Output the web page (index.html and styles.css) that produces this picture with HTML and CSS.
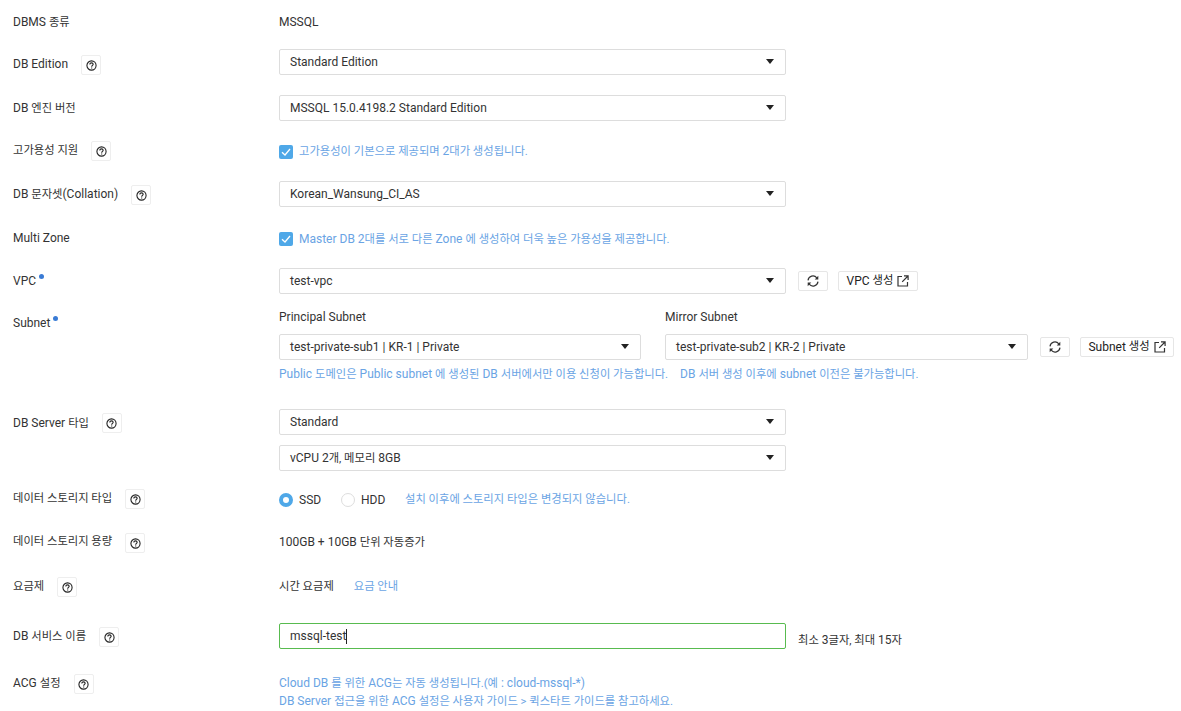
FILE: index.html
```html
<!DOCTYPE html>
<html lang="ko">
<head>
    <meta charset="UTF-8">
    <title>Cloud DB for MSSQL</title>
    <link rel="stylesheet" href="styles.css">
</head>
<body>
    <svg class="defs" aria-hidden="true">
        <symbol id="icon-help" viewBox="0 0 12 12">
            <circle cx="6" cy="6" r="5" fill="none" stroke="#222" stroke-width="1.2"/>
            <path d="M4.2 4.8C4.2 3.7 5 3.1 6 3.1S7.8 3.7 7.8 4.7C7.8 5.8 6.2 5.9 6.2 7.3" fill="none" stroke="#222" stroke-width="1.2"/>
            <path d="M5.6 8.2h1.2v1.2H5.6z" fill="#222"/>
        </symbol>
        <symbol id="icon-refresh" viewBox="0 0 12 12">
            <path d="M1 5.3A5 5 0 0 1 9.8 2.8M11 6.7A5 5 0 0 1 2.2 9.2" fill="none" stroke="#333" stroke-width="1.2"/>
            <path d="M11.3 .8v3.6H7.7zM.7 11.2V7.6h3.6z" fill="#333"/>
        </symbol>
        <symbol id="icon-open" viewBox="0 0 12 12">
            <path d="M5 1.5H1v9.5h9.5V7" fill="none" stroke="#333" stroke-width="1.2"/>
            <path d="M7 .9h4.1V5M11 1 5.2 6.8" fill="none" stroke="#333" stroke-width="1.2"/>
        </symbol>
    </svg>

    <form class="form">
        <div class="row row-first">
            <div class="label"><span>DBMS <span class="ko">종류</span></span></div>
            <div class="value">MSSQL</div>
        </div>

        <div class="row">
            <div class="label pad-5"><span>DB Edition</span><button type="button" class="help help-low"><svg><use href="#icon-help"/></svg></button></div>
            <div class="select">Standard Edition</div>
        </div>

        <div class="row">
            <div class="label pad-3"><span>DB <span class="ko">엔진 버전</span></span></div>
            <div class="select">MSSQL 15.0.4198.2 Standard Edition</div>
        </div>

        <div class="row">
            <div class="label"><span class="ko">고가용성 지원</span><button type="button" class="help"><svg><use href="#icon-help"/></svg></button></div>
            <div class="check-line">
                <span class="checkbox"><svg viewBox="0 0 14 14"><path d="M3 7.2 6 10l5-6" fill="none" stroke="#fff" stroke-width="1.3"/></svg></span>
                <span class="note ko">고가용성이 기본으로 제공되며 <span class="en">2</span>대가 생성됩니다.</span>
            </div>
        </div>

        <div class="row">
            <div class="label pad-3"><span>DB <span class="ko">문자셋</span>(Collation)</span><button type="button" class="help help-low"><svg><use href="#icon-help"/></svg></button></div>
            <div class="select">Korean_Wansung_CI_AS</div>
        </div>

        <div class="row">
            <div class="label pad-1">Multi Zone</div>
            <div class="check-line check-zone">
                <span class="checkbox"><svg viewBox="0 0 14 14"><path d="M3 7.2 6 10l5-6" fill="none" stroke="#fff" stroke-width="1.3"/></svg></span>
                <span class="note">Master DB 2<span class="ko">대를 서로 다른</span> Zone <span class="ko">에 생성하여 더욱 높은 가용성을 제공합니다.</span></span>
            </div>
        </div>

        <div class="row">
            <div class="label pad-3">VPC<i class="required"></i></div>
            <div class="select">test-vpc</div>
            <button type="button" class="btn btn-icon"><svg><use href="#icon-refresh"/></svg></button>
            <button type="button" class="btn btn-vpc">VPC&nbsp;<span class="ko">생성</span><svg><use href="#icon-open"/></svg></button>
        </div>

        <div class="row row-subnet">
            <div class="label pad-6">Subnet<i class="required"></i></div>
            <div class="subnet">
                <div class="subnet-cols">
                    <div class="subnet-col">
                        <div class="sub-title">Principal Subnet</div>
                        <div class="select select-sub">test-private-sub1 | KR-1 | Private</div>
                    </div>
                    <div class="subnet-col">
                        <div class="sub-title">Mirror Subnet</div>
                        <div class="select-line">
                            <div class="select select-sub2">test-private-sub2 | KR-2 | Private</div>
                            <button type="button" class="btn btn-icon"><svg><use href="#icon-refresh"/></svg></button>
                            <button type="button" class="btn btn-subnet">Subnet&nbsp;<span class="ko">생성</span><svg><use href="#icon-open"/></svg></button>
                        </div>
                    </div>
                </div>
                <div class="note note-subnet">
                    <span>Public <span class="ko">도메인은</span> Public subnet <span class="ko">에 생성된</span> DB <span class="ko">서버에서만 이용 신청이 가능합니다.</span></span>
                    <span>DB <span class="ko">서버 생성 이후에</span> subnet <span class="ko">이전은 불가능합니다.</span></span>
                </div>
            </div>
        </div>

        <div class="row row-server">
            <div class="label pad-4"><span>DB Server <span class="ko">타입</span></span><button type="button" class="help"><svg><use href="#icon-help"/></svg></button></div>
            <div class="select-stack">
                <div class="select">Standard</div>
                <div class="select">vCPU 2<span class="ko">개, 메모리</span> 8GB</div>
            </div>
        </div>

        <div class="row row-storage">
            <div class="label"><span class="ko">데이터 스토리지 타입</span><button type="button" class="help"><svg><use href="#icon-help"/></svg></button></div>
            <div class="radios">
                <span class="radio radio-on"></span><span class="radio-text">SSD</span>
                <span class="radio"></span><span class="radio-text">HDD</span>
                <span class="note ko radio-note">설치 이후에 스토리지 타입은 변경되지 않습니다.</span>
            </div>
        </div>

        <div class="row row-size">
            <div class="label"><span class="ko">데이터 스토리지 용량</span><button type="button" class="help help-low"><svg><use href="#icon-help"/></svg></button></div>
            <div class="value">100GB + 10GB <span class="ko">단위 자동증가</span></div>
        </div>

        <div class="row row-price">
            <div class="label"><span class="ko">요금제</span><button type="button" class="help"><svg><use href="#icon-help"/></svg></button></div>
            <div class="value value-price"><span class="ko">시간 요금제</span><a class="note price-link"><span class="ko">요금 안내</span></a></div>
        </div>

        <div class="row row-name">
            <div class="label pad-3"><span>DB <span class="ko">서비스 이름</span></span><button type="button" class="help help-low"><svg><use href="#icon-help"/></svg></button></div>
            <div class="input-box">mssql-test<span class="caret"></span></div>
            <div class="hint"><span class="ko">최소</span> 3<span class="ko">글자, 최대</span> 15<span class="ko">자</span></div>
        </div>

        <div class="row row-acg">
            <div class="label"><span>ACG <span class="ko">설정</span></span><button type="button" class="help help-low"><svg><use href="#icon-help"/></svg></button></div>
            <div class="note note-acg">
                <div>Cloud DB <span class="ko">를 위한</span> ACG<span class="ko">는 자동 생성됩니다.(예</span> : cloud-mssql-*)</div>
                <div>DB Server <span class="ko">접근을 위한</span> ACG <span class="ko">설정은 사용자 가이드 &gt; 퀵스타트 가이드를 참고하세요.</span></div>
            </div>
        </div>
    </form>
</body>
</html>
```

FILE: styles.css
```css
body {
    margin: 0;
    background: #fff;
    font-family: Roboto, "Noto Sans CJK KR", sans-serif;
    font-size: 12px;
    line-height: 20px;
    color: #333;
}
.ko {
    font-size: 11.3px;
    line-height: 1;
}
.label > .ko,
.note.ko {
    line-height: 20px;
}
.en {
    font-size: 12px;
    line-height: 1;
}
.defs {
    display: none;
}
.form {
    padding: 12px 0 0 13px;
}
.row {
    display: flex;
    align-items: flex-start;
    margin-top: 20px;
}
.row-first {
    margin-top: 0;
    height: 17px;
}
.label {
    display: flex;
    align-items: flex-start;
    width: 266px;
    flex: none;
}
.pad-1 {
    padding-top: 1px;
}
.pad-3 {
    padding-top: 3px;
}
.pad-4 {
    padding-top: 4px;
}
.pad-5 {
    padding-top: 5px;
}
.pad-6 {
    padding-top: 6px;
}
.help {
    width: 20px;
    height: 20px;
    margin-left: 13px;
    padding: 0;
    border: 1px solid #eee;
    border-radius: 2px;
    background: #fff;
    display: flex;
    align-items: center;
    justify-content: center;
}
.help-low {
    margin-top: 1px;
}
.help svg {
    width: 11px;
    height: 11px;
}
.select {
    position: relative;
    width: 507px;
    height: 26px;
    padding: 0 10px;
    border: 1px solid #ddd;
    border-radius: 2px;
    background: #fff;
    line-height: 24px;
    box-sizing: border-box;
    flex: none;
}
.select::after {
    content: "";
    position: absolute;
    top: 9px;
    right: 11px;
    border-top: 5px solid #222;
    border-left: 4.5px solid transparent;
    border-right: 4.5px solid transparent;
}
.check-line {
    display: flex;
    align-items: center;
    height: 20px;
    padding-top: 2px;
    box-sizing: border-box;
}
.check-zone {
    height: 21px;
    padding-top: 3px;
}
.checkbox {
    width: 14px;
    height: 14px;
    margin-right: 6px;
    border-radius: 2px;
    background: #4fa8e8;
}
.checkbox svg {
    display: block;
}
.note {
    color: #6aa4e4;
}
.btn {
    display: flex;
    align-items: center;
    justify-content: center;
    height: 20px;
    margin-top: 3px;
    padding: 0;
    border: 1px solid #e6e6e6;
    border-radius: 2px;
    background: #fff;
    color: #222;
    font: inherit;
    flex: none;
}
.btn svg {
    width: 12px;
    height: 12px;
    margin-left: 4px;
}
.btn-icon {
    width: 30px;
    margin-left: 12px;
}
.btn-icon svg {
    margin-left: 0;
}
.btn-vpc {
    width: 80px;
    margin-left: 10px;
}
.btn-subnet {
    width: 94px;
    margin-left: 10px;
}
.required {
    width: 5px;
    height: 5px;
    margin: 3px 0 0 3px;
    border-radius: 50%;
    background: #3a7bd5;
}
.row-subnet {
    margin-top: 13px;
}
.subnet-cols {
    display: flex;
    gap: 24px;
}
.sub-title {
    height: 20px;
    margin-bottom: 7px;
}
.select-sub {
    width: 362px;
}
.select-sub2 {
    width: 363px;
}
.select-line {
    display: flex;
}
.note-subnet {
    display: flex;
    gap: 12px;
    margin-top: 4px;
}
.row-server {
    margin-top: 25px;
}
.select-stack {
    display: flex;
    flex-direction: column;
    gap: 10px;
}
.row-storage {
    margin-top: 18px;
}
.radios {
    display: flex;
    align-items: center;
    height: 20px;
    margin-top: 1px;
}
.radio {
    width: 14px;
    height: 14px;
    border: 1px solid #ddd;
    border-radius: 50%;
    box-sizing: border-box;
}
.radio-on {
    border: 4px solid #4fa8e8;
}
.radio-text {
    margin: 0 14px 0 6px;
    width: 28px;
}
.radio-note {
    margin-left: 2px;
}
.row-size {
    margin-top: 22px;
}
.row-price {
    margin-top: 24px;
}
.value-price {
    margin-top: -1px;
}
.price-link {
    margin-left: 20px;
}
.row-name {
    margin-top: 26px;
}
.input-box {
    width: 507px;
    height: 26px;
    padding: 0 10px;
    border: 1px solid #58bb4f;
    border-radius: 2px;
    line-height: 24px;
    box-sizing: border-box;
    flex: none;
}
.caret {
    display: inline-block;
    width: 1px;
    height: 15px;
    background: #222;
    vertical-align: middle;
}
.hint {
    margin: 7px 0 0 12px;
}
.row-acg {
    margin-top: 23px;
}
.note-acg {
    line-height: 18px;
    padding-top: 1px;
}
```
